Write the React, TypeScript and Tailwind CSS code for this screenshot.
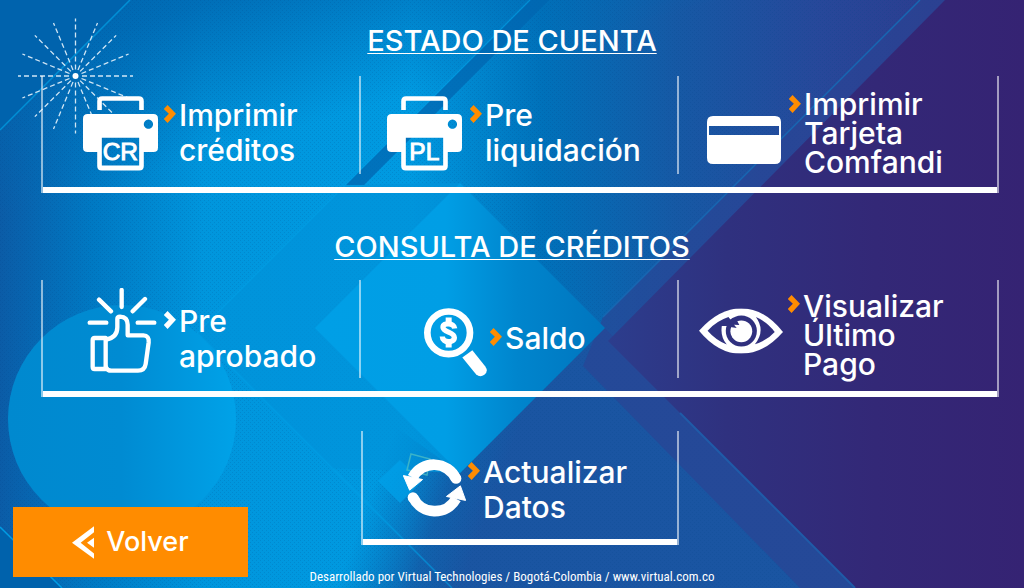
import type { ReactNode } from "react";

function Backdrop() {
  return (
    <svg
      className="absolute inset-0 h-full w-full"
      viewBox="0 0 1024 588"
      preserveAspectRatio="xMidYMid slice"
      aria-hidden="true"
    >
      <defs>
        <linearGradient id="base" x1="0" y1="0" x2="1024" y2="0" gradientUnits="userSpaceOnUse">
          <stop offset="0" stopColor="#0b5ca7" />
          <stop offset="0.09" stopColor="#0079c3" />
          <stop offset="0.2" stopColor="#0096dd" />
          <stop offset="0.4" stopColor="#009ae1" />
          <stop offset="0.53" stopColor="#0071ba" />
          <stop offset="0.66" stopColor="#1659a5" />
          <stop offset="0.8" stopColor="#27489a" />
          <stop offset="1" stopColor="#2f3587" />
        </linearGradient>
        <linearGradient id="top" x1="0" y1="0" x2="60" y2="200" gradientUnits="userSpaceOnUse">
          <stop offset="0" stopColor="#0066b0" />
          <stop offset="0.3" stopColor="#0066b0" stopOpacity="0.8" />
          <stop offset="1" stopColor="#0069b3" stopOpacity="0" />
        </linearGradient>
        <linearGradient id="low" x1="390" y1="440" x2="500" y2="480" gradientUnits="userSpaceOnUse">
          <stop offset="0" stopColor="#0a62ad" stopOpacity="0" />
          <stop offset="0.6" stopColor="#1459a5" stopOpacity="0.85" />
          <stop offset="1" stopColor="#1a55a2" />
        </linearGradient>
        <linearGradient id="violet" x1="600" y1="0" x2="1024" y2="0" gradientUnits="userSpaceOnUse">
          <stop offset="0" stopColor="#2c3e8e" />
          <stop offset="0.3" stopColor="#2f317f" />
          <stop offset="0.65" stopColor="#332877" />
          <stop offset="1" stopColor="#352373" />
        </linearGradient>
        <linearGradient id="diamond" x1="315" y1="0" x2="605" y2="0" gradientUnits="userSpaceOnUse">
          <stop offset="0" stopColor="#009fe6" />
          <stop offset="0.45" stopColor="#009ee5" />
          <stop offset="0.7" stopColor="#0085cd" />
          <stop offset="1" stopColor="#0075be" />
        </linearGradient>
        <linearGradient id="disc" x1="8" y1="0" x2="236" y2="0" gradientUnits="userSpaceOnUse">
          <stop offset="0" stopColor="#0089cf" />
          <stop offset="0.5" stopColor="#008bd2" />
          <stop offset="1" stopColor="#00a2e8" />
        </linearGradient>
        <pattern id="dots" width="4" height="4" patternUnits="userSpaceOnUse">
          <rect width="1" height="1" fill="#00407f" fillOpacity="0.17" />
          <rect x="2" y="2" width="1" height="1" fill="#00407f" fillOpacity="0.17" />
        </pattern>
      </defs>
      <rect width="1024" height="588" fill="url(#base)" />
      <rect width="1024" height="260" fill="url(#top)" />
      <path d="M330 380L460 473L605 328L855 588H330Z" fill="url(#low)" />
      <rect width="1024" height="588" fill="url(#dots)" />
      <path d="M0 0H130L0 130Z" fill="#0063ad" />
      <path d="M130 0L0 130" stroke="#0090d6" strokeWidth="1.5" />
      <path d="M345 185L197 333L330 468L460 473L315 328L460 183Z" fill="#0093da" fillOpacity="0.7" />
      <path d="M530 0L197 333L452 588" fill="none" stroke="#00a0e6" strokeWidth="1.5" strokeOpacity="0.6" />
      <path d="M531 0H549L364 185H346Z" fill="#0065b0" fillOpacity="0.75" />
      <path d="M920 0H1024V588H800L583 366L603 317Z" fill="#2b4394" fillOpacity="0.65" />
      <path d="M945 0H1024V588H855L608 341Z" fill="url(#violet)" />
      <path d="M920 0L603 317" stroke="#1767b2" strokeWidth="1.5" />
      <path d="M680 413L855 588" stroke="#1f5ba8" strokeWidth="2" />
      <path d="M460 183L605 328L460 473L315 328Z" fill="url(#diamond)" />
      <circle cx="122" cy="419" r="114" fill="url(#disc)" />
      <path d="M0 527L62 588H0Z" fill="#0062ac" />
      <path d="M0 527L62 588" stroke="#009de4" strokeWidth="1.5" />
      <path d="M400 460L422 481L400 503L378 481Z" fill="#00a0e8" fillOpacity="0.75" />
      <path d="M411 454L430 459L427 475L407 470Z" fill="none" stroke="#4dbfc4" strokeOpacity="0.75" strokeWidth="1.5" />
      <g stroke="#e6f3fc" strokeWidth="1.3" strokeOpacity="0.9" strokeDasharray="5 3">
        {Array.from({ length: 16 }, (_, i) => (
          <path key={i} d="M82 76H133" transform={`rotate(${i * 22.5} 75.5 76)`} />
        ))}
      </g>
      <circle cx="75.5" cy="76" r="3" fill="#fff" />
    </svg>
  );
}

function Chevron({ className }: { className: string }) {
  return (
    <svg className={`h-[18px] w-3 shrink-0 ${className}`} viewBox="492 315 37 55" aria-hidden="true">
      <path d="M503 315L529 342L503 370L491 358L507 342L491 327Z" fill="currentColor" />
    </svg>
  );
}

function Printer({ code }: { code: string }) {
  return (
    <svg className="h-[75px] w-[75px]" viewBox="248 288 227 226" aria-hidden="true">
      <path d="M298 330V303Q298 295 306 295H417Q425 295 425 303V330" fill="none" stroke="#fff" strokeWidth="14" />
      <path
        fill="#fff"
        fillRule="evenodd"
        d="M262 342H461Q475 342 475 356V443Q475 457 461 457H432V499Q432 513 418 513H305Q291 513 291 499V457H262Q248 457 248 443V356Q248 342 262 342ZM305 414V498H418V414ZM446 359a14 14 0 1 0 .1 0Z"
      />
      <text
        x="361"
        y="482"
        textAnchor="middle"
        fill="#fff"
        stroke="#fff"
        strokeWidth="3"
        fontFamily="'Liberation Sans', Arial, sans-serif"
        fontSize="74"
      >
        {code}
      </text>
    </svg>
  );
}

function BankCard() {
  return (
    <svg className="h-12 w-[74px]" viewBox="0 0 74 48" aria-hidden="true">
      <path
        fill="#fff"
        fillRule="evenodd"
        d="M6 0H68Q74 0 74 6V42Q74 48 68 48H6Q0 48 0 42V6Q0 0 6 0ZM2 10V19H72V10Z"
      />
    </svg>
  );
}

function Thumb() {
  return (
    <svg className="h-[85px] w-[70px]" viewBox="260 264 208 255" aria-hidden="true">
      <g fill="none" stroke="#fff" strokeWidth="13" strokeLinecap="round" strokeLinejoin="round">
        <path d="M363 270V321M295 299L331 334M433 297L396 334M267 368H317M411 368H461" />
        <path d="M282 414H315V507H282Q276 507 276 500V421Q276 414 282 414Z" />
        <path d="M316 419C338 415 350 402 350 382V357Q350 350 358 350Q381 351 381 374V406H428Q446 407 444 427L435 492Q432 512 412 512H332Q320 512 316 502" />
      </g>
    </svg>
  );
}

function Magnifier() {
  return (
    <svg className="h-[69px] w-[63px]" viewBox="252 323 189 206" aria-hidden="true">
      <circle cx="326" cy="397" r="64" fill="none" stroke="#fff" strokeWidth="20" />
      <path d="M367 471L397 449L436 498Q446 513 433 523Q420 532 408 521Z" fill="#fff" />
      <path
        d="M344 384C343 367 309 365 309 380C309 396 343 394 343 411C343 429 307 428 307 408"
        fill="none"
        stroke="#fff"
        strokeWidth="16"
      />
      <path d="M317 351H335V370H317ZM317 421H335V441H317Z" fill="#fff" />
    </svg>
  );
}

function Eye() {
  return (
    <svg className="h-[46px] w-[84px]" viewBox="54 324 254 138" aria-hidden="true">
      <mask id="eye-mask" maskUnits="userSpaceOnUse" x="54" y="324" width="254" height="138">
        <path fill="#fff" d="M54 392Q115 324 182 324Q250 324 308 396Q250 462 182 462Q112 462 54 392Z" />
        <path
          fill="#000"
          d="M80 392Q107 363 143 351L149 358L158 352L146 378H123Q118 410 138 434Q103 419 80 392ZM226 351Q260 365 283 396Q260 422 223 433Q256 392 226 351Z"
        />
        <circle cx="182" cy="393" r="47" fill="#000" />
        <circle cx="182" cy="394" r="33" fill="#fff" />
        <path fill="#000" d="M148 381L168 384L160 374L176 375L166 356L142 368Z" />
      </mask>
      <rect x="54" y="324" width="254" height="138" fill="#fff" mask="url(#eye-mask)" />
    </svg>
  );
}

function Refresh() {
  return (
    <svg className="h-[60px] w-[63px]" viewBox="189 174 190 179" aria-hidden="true">
      <g fill="none" stroke="#fff" strokeWidth="32">
        <path d="M218 232A73 73 0 0 1 349 236" />
        <path d="M219 291A73 73 0 0 0 349 296" />
      </g>
      <circle cx="349" cy="235" r="16" fill="#fff" />
      <circle cx="219" cy="292" r="16" fill="#fff" />
      <path d="M190 226L248 238L209 270ZM362 257L378 301L320 289Z" fill="#fff" stroke="#fff" strokeWidth="3" strokeLinejoin="round" />
    </svg>
  );
}

function BackArrow() {
  return (
    <svg className="h-[33px] w-[22px]" viewBox="207 375 66 98" aria-hidden="true">
      <path d="M207 425L273 375V393L233 425L273 457V473ZM252 425L273 410V440Z" fill="#fff" />
    </svg>
  );
}

type OptionProps = {
  icon: ReactNode;
  lines: string[];
  className: string;
  iconClass: string;
  textClass?: string;
  chevronClass?: string;
};

function Option({ icon, lines, className, iconClass, textClass = "leading-[35px]", chevronClass = "text-[#ff8c00]" }: OptionProps) {
  return (
    <button type="button" className={`flex w-full cursor-pointer items-start text-left text-[30px] font-medium ${className}`}>
      <span className={`shrink-0 ${iconClass}`}>{icon}</span>
      <Chevron className={`mt-[7px] ${chevronClass}`} />
      <span className={`ml-[3px] ${textClass}`}>
        {lines.map((line) => (
          <span key={line} className="block whitespace-nowrap">
            {line}
          </span>
        ))}
      </span>
    </button>
  );
}

function Panel({ children }: { children: ReactNode }) {
  return (
    <div className="ml-[41px] mr-[25px] border-x-2 border-x-white/55">
      <div className="grid h-[111px] grid-cols-3">{children}</div>
      <div className="h-[6px] bg-white" />
    </div>
  );
}

const divider = "h-[98px] border-r-2 border-white/55";
const heading = "text-center text-[29px] font-medium leading-9 underline decoration-1 underline-offset-2";

export default function App() {
  return (
    <main className="relative isolate flex min-h-screen flex-col overflow-hidden bg-[#0069b3] font-['Inter','Open_Sans',sans-serif] text-white">
      <div className="absolute inset-0 -z-10">
        <Backdrop />
      </div>

      <h2 className={`mt-[23px] ${heading}`}>ESTADO DE CUENTA</h2>
      <div className="mt-[17px]">
        <Panel>
          <div className={divider}>
            <Option icon={<Printer code="CR" />} lines={["Imprimir", "créditos"]} className="pl-10 pt-[22px]" iconClass="w-[81px] -mt-0.5" />
          </div>
          <div className={divider}>
            <Option icon={<Printer code="PL" />} lines={["Pre", "liquidación"]} className="pl-[26px] pt-[22px]" iconClass="w-[83px] -mt-0.5" />
          </div>
          <Option
            icon={<BankCard />}
            lines={["Imprimir", "Tarjeta", "Comfandi"]}
            className="pl-7 pt-3"
            iconClass="w-[82px] pt-7"
            textClass="pt-0.5 leading-[29px]"
          />
        </Panel>
      </div>

      <h2 className={`mt-9 ${heading}`}>CONSULTA DE CRÉDITOS</h2>
      <div className="mt-[15px]">
        <Panel>
          <div className={divider}>
            <Option
              icon={<Thumb />}
              lines={["Pre", "aprobado"]}
              className="pl-11 pt-6"
              iconClass="w-[77px] -mt-4"
              chevronClass="text-white"
            />
          </div>
          <div className={divider}>
            <Option icon={<Magnifier />} lines={["Saldo"]} className="pl-[63px] pt-[41px]" iconClass="w-[66px] -mt-[13px]" />
          </div>
          <Option
            icon={<Eye />}
            lines={["Visualizar", "Último", "Pago"]}
            className="pl-5 pt-2"
            iconClass="w-[89px] pt-5"
            textClass="pt-1 leading-[29px]"
          />
        </Panel>
      </div>

      <div className="mt-[34px] grid grow grid-cols-[361fr_318fr_345fr] grid-rows-[114px_1fr]">
        <div className="col-start-2 row-start-1 flex flex-col border-x-2 border-x-white/55">
          <div className="grow">
            <Option icon={<Refresh />} lines={["Actualizar", "Datos"]} className="pl-10 pt-6" iconClass="w-[65px] pt-[3px]" />
          </div>
          <div className="h-[6px] bg-white" />
        </div>
        <footer className="col-span-3 col-start-1 row-start-2 self-end pb-[3px] text-center font-['Liberation_Sans_Narrow','Roboto_Condensed','Liberation_Sans',sans-serif] text-[13px] leading-4">
          Desarrollado por Virtual Technologies / Bogotá-Colombia / www.virtual.com.co
        </footer>
        <button
          type="button"
          className="col-start-1 row-span-2 row-start-1 mb-[11px] ml-[13px] flex h-[70px] w-[235px] cursor-pointer items-center justify-center gap-3 self-end bg-[#ff8c00] text-[27px] font-medium"
        >
          <BackArrow />
          Volver
        </button>
      </div>
    </main>
  );
}
